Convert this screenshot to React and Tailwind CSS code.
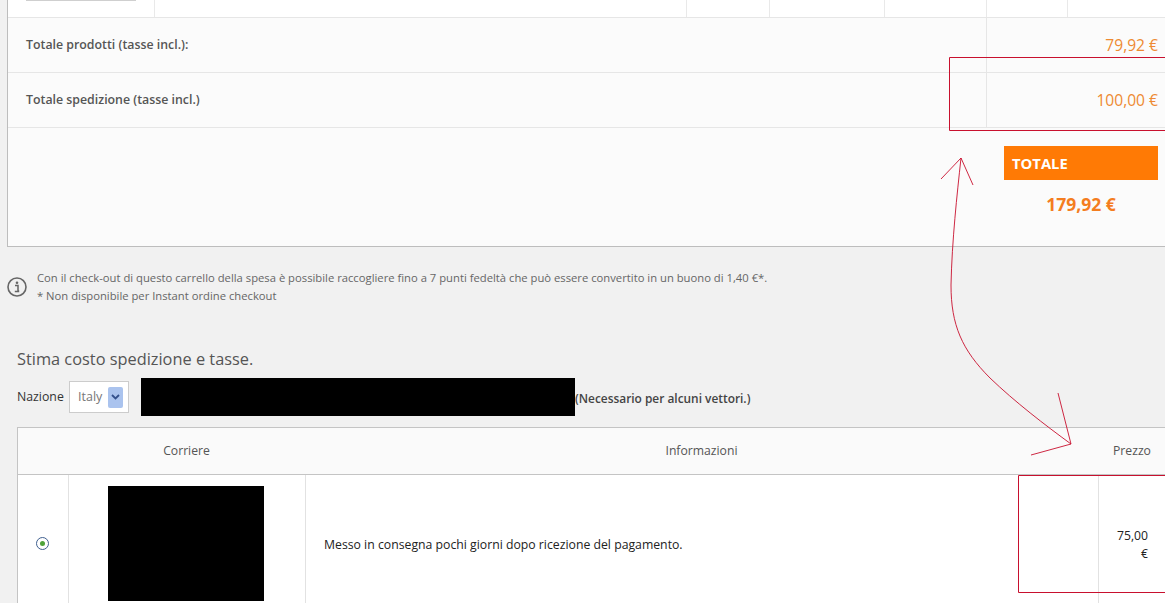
import React from "react";

const TopCell = ({ className = "" }) => (
  <div className={`h-full border-r border-[#e9e9e9] ${className}`} />
);

const TotalRow = ({ label, value }) => (
  <div className="flex h-[55px] border-b border-[#e6e6e6] bg-[#fbfbfb]">
    <div className="flex flex-1 items-center pl-[18px] text-[12.35px] font-semibold text-[#555]">
      {label}
    </div>
    <div className="flex w-[191px] items-center justify-end border-l border-[#e6e6e6] pr-[19px] pt-[1px] text-[15.6px] text-[#ee8a32]">
      {value}
    </div>
  </div>
);

// hand-drawn red marks that lie over the page
const Annotations = () => (
  <svg className="absolute left-0 top-0" width="1165" height="603" fill="none" stroke="#c8102e">
    <path d="M1166 57.5H949.5V130.5H1166" />
    <path d="M1166 475.5H1018.5V592.5H1166" />
    <path d="M961 158C957 195 952 240 951 285C951 325 962 350 990 378C1015 402 1045 425 1071 444" strokeWidth="0.9" />
    <path d="M941 179L961 158L973 185" strokeWidth="0.9" />
    <path d="M1058 393L1071 444L1031 455" strokeWidth="0.9" />
  </svg>
);

const App = () => (
  <div className="relative h-[603px] w-[1165px] overflow-hidden bg-[#f1f1f1] font-['Open_Sans',sans-serif] text-[#555]">
    <div className="ml-[7px] h-[247px] w-[1170px] border-b border-l border-[#bdbdbd] bg-[#fbfbfb]">
      <div className="flex h-[18px] border-b border-[#e6e6e6] bg-white">
        <div className="relative w-[147px] border-r border-[#e9e9e9]">
          <div className="absolute left-[18px] top-0 h-[1px] w-[110px] bg-[#cfcfcf]" />
        </div>
        <TopCell className="w-[532px]" />
        <TopCell className="w-[83px]" />
        <TopCell className="w-[115px]" />
        <TopCell className="w-[102px]" />
        <TopCell className="w-[81px]" />
      </div>
      <TotalRow label="Totale prodotti (tasse incl.):" value="79,92 €" />
      <TotalRow label="Totale spedizione (tasse incl.)" value="100,00 €" />
      <div className="ml-[996px] mt-[18px] w-[154px]">
        <div className="flex h-[34px] items-center bg-[#ff7a05] pl-[8px] text-[14.8px] font-bold text-white">
          TOTALE
        </div>
        <div className="mt-[13px] text-center text-[17.5px] font-bold leading-[22px] text-[#f47d1f]">
          179,92 €
        </div>
      </div>
    </div>

    <div className="ml-[7px] mt-[22px] flex items-center">
      <svg width="20" height="20" viewBox="0 0 20 20" fill="none" className="-mt-[1px]">
        <circle cx="10" cy="10" r="9" stroke="#666" strokeWidth="1.6" />
        <circle cx="10" cy="5.8" r="1.3" fill="#666" />
        <path d="M8 8.6H11V14H12.2M7.8 14.4H12.2" stroke="#666" strokeWidth="1.5" />
      </svg>
      <div className="ml-[10px] text-[11.25px] leading-[18px] text-[#666]">
        <p>
          Con il check-out di questo carrello della spesa è possibile raccogliere fino a 7 punti fedeltà che può essere convertito in un buono di 1,40 €*.
        </p>
        <p>* Non disponibile per Instant ordine checkout</p>
      </div>
    </div>

    <h3 className="ml-[17px] mt-[42px] text-[16.35px] leading-[24px] text-[#555]">
      Stima costo spedizione e tasse.
    </h3>

    <div className="ml-[17px] mt-[7px] flex h-[38px] items-center text-[12.3px]">
      <span className="w-[52px] pt-[1px] text-[#333]">Nazione</span>
      <div className="flex h-[32px] w-[60px] items-center justify-between border border-[#ccc] bg-white pl-[8px] pr-[5px] text-[12.5px] text-[#777]">
        Italy
        <span className="flex h-[21px] w-[15px] items-center justify-center rounded-[2px] bg-[#aac3ee]">
          <svg width="9" height="6" viewBox="0 0 9 6" fill="none">
            <path d="M1 1L4.5 4.5L8 1" stroke="#33508c" strokeWidth="1.8" />
          </svg>
        </span>
      </div>
      <div className="ml-[12px] h-[38px] w-[434px] bg-black" />
      <span className="pt-[4px] text-[11.9px] font-semibold text-[#444]">(Necessario per alcuni vettori.)</span>
    </div>

    <div className="ml-[17px] mt-[11px] w-[1149px] border-l border-t border-[#c4c4c4] bg-white text-[12.2px]">
      <div className="grid h-[47px] grid-cols-[51px_237px_793px_68px] items-center border-b border-[#c4c4c4] bg-[#fafafa] text-center text-[#555]">
        <div />
        <div className="pr-[2px]">Corriere</div>
        <div className="pr-[2px]">Informazioni</div>
        <div className="pr-[2px]">Prezzo</div>
      </div>
      <div className="grid h-[140px] grid-cols-[51px_237px_793px_68px] text-[#222]">
        <div className="flex items-start justify-center border-r border-[#e2e2e2] pr-[2px] pt-[62px]">
          <span className="flex h-[13px] w-[13px] items-center justify-center rounded-full border border-[#3f5f8f] bg-white">
            <span className="h-[5px] w-[5px] rounded-full bg-[#4fa33a]" />
          </span>
        </div>
        <div className="flex justify-center border-r border-[#e2e2e2] pr-[2px] pt-[11px]">
          <div className="h-[115px] w-[156px] bg-black" />
        </div>
        <div className="border-r border-[#e2e2e2] pl-[18px] pt-[61px] text-[12.25px] leading-[18px]">
          Messo in consegna pochi giorni dopo ricezione del pagamento.
        </div>
        <div className="pl-[17px] pr-[19px] pt-[52px] text-right leading-[18px]">75,00 €</div>
      </div>
    </div>

    <Annotations />
  </div>
);

export default App;
